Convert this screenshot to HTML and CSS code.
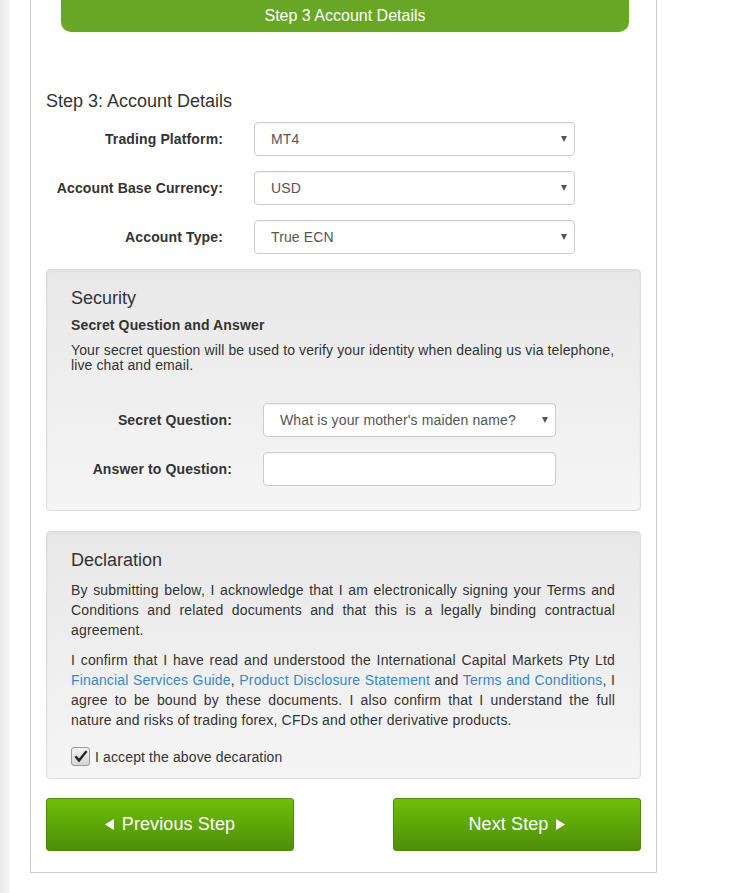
FILE: index.html
```html
<!DOCTYPE html>
<html lang="en">
<head>
    <meta charset="UTF-8">
    <title>Step 3 Account Details</title>
    <link rel="stylesheet" href="styles.css">
</head>
<body>
    <div class="page">
        <div class="step-bar">Step 3 Account Details</div>

        <h2 class="step-title">Step 3: Account Details</h2>

        <div class="form-grid">
            <label class="field-label">Trading Platform:</label>
            <div class="select-wrap"><select class="field"><option>MT4</option></select></div>

            <label class="field-label">Account Base Currency:</label>
            <div class="select-wrap"><select class="field"><option>USD</option></select></div>

            <label class="field-label">Account Type:</label>
            <div class="select-wrap"><select class="field"><option>True ECN</option></select></div>
        </div>

        <div class="well security">
            <h3>Security</h3>
            <h4>Secret Question and Answer</h4>
            <p class="note">Your secret question will be used to verify your identity when dealing us via telephone, live chat and email.</p>

            <div class="form-grid narrow">
                <label class="field-label">Secret Question:</label>
                <div class="select-wrap"><select class="field"><option>What is your mother's maiden name?</option></select></div>

                <label class="field-label">Answer to Question:</label>
                <input class="field" type="text">
            </div>
        </div>

        <div class="well declaration">
            <h3>Declaration</h3>
            <p>By submitting below, I acknowledge that I am electronically signing your Terms and Conditions and related documents and that this is a legally binding contractual agreement.</p>
            <p>I confirm that I have read and understood the International Capital Markets Pty Ltd <a href="#">Financial Services Guide</a>, <a href="#">Product Disclosure Statement</a> and <a href="#">Terms and Conditions</a>, I agree to be bound by these documents. I also confirm that I understand the full nature and risks of trading forex, CFDs and other derivative products.</p>
            <label class="accept">
                <span class="check">
                    <svg width="14" height="13" viewBox="0 0 14 13"><path d="M0.5 7 L5 12.5 L13.5 1.8 L11.6 0.4 L5 8.6 L2.4 5.4 Z" fill="#262626"/></svg>
                </span>
                I accept the above decaration
            </label>
        </div>

        <div class="actions">
            <button class="btn-step" type="button">
                <svg width="9" height="11" viewBox="0 0 9 11"><path d="M0 5.5 L9 0 L9 11 Z" fill="#fff"/></svg>
                Previous Step
            </button>
            <button class="btn-step" type="button">
                Next Step
                <svg width="9" height="11" viewBox="0 0 9 11"><path d="M9 5.5 L0 0 L0 11 Z" fill="#fff"/></svg>
            </button>
        </div>
    </div>
</body>
</html>
```

FILE: styles.css
```css
html, body {
    margin: 0;
    padding: 0;
}
body {
    font-family: "Liberation Sans", Arial, sans-serif;
    font-size: 14px;
    letter-spacing: 0.13px;
    color: #333;
    background: linear-gradient(to right, #e9e9e9 0, #f3f3f3 8px, #fff 11px) no-repeat;
    min-height: 893px;
}
.page {
    width: 595px;
    margin-left: 30px;
    border: 1px solid #ccc;
    border-top: none;
    padding: 0 15px 21px;
}
.step-bar {
    height: 32px;
    line-height: 32px;
    margin: 0 12px 0 15px;
    background: #67a725;
    color: #fff;
    font-size: 16px;
    letter-spacing: normal;
    text-align: center;
    border-radius: 0 0 10px 10px;
    box-shadow: 0 1px 3px rgba(200, 220, 150, 0.35);
}
.step-title {
    margin: 59px 0 11px;
    font-size: 18px;
    font-weight: normal;
    letter-spacing: normal;
    line-height: 20px;
}

/* form rows */
.form-grid {
    display: grid;
    grid-template-columns: 177px 321px;
    column-gap: 31px;
    row-gap: 15px;
    align-items: center;
}
.form-grid.narrow {
    grid-template-columns: 161px 293px;
}
.field-label {
    text-align: right;
    font-weight: bold;
}
.field {
    box-sizing: border-box;
    width: 100%;
    height: 34px;
    padding: 0 16px;
    border: 1px solid #ccc;
    border-radius: 4px;
    background: #fff;
    font-family: inherit;
    font-size: 14px;
    letter-spacing: 0.13px;
    color: #555;
    box-shadow: inset 0 1px 1px rgba(0, 0, 0, 0.05);
    -webkit-appearance: none;
    appearance: none;
    outline: none;
}
.select-wrap {
    position: relative;
}
.select-wrap::after {
    content: "";
    position: absolute;
    right: 8px;
    top: 14px;
    border-left: 3.5px solid transparent;
    border-right: 3.5px solid transparent;
    border-top: 6px solid #555;
    pointer-events: none;
}

/* grey panels */
.well {
    margin-top: 15px;
    padding: 18px 25px 24px 24px;
    border: 1px solid #dcdcdc;
    border-radius: 4px;
    background: linear-gradient(to bottom, #e8e8e8 0, #f5f5f5 100%);
    box-shadow: inset 0 1px 3px rgba(0, 0, 0, 0.05), 0 1px 0 rgba(255, 255, 255, 0.1);
}
.well h3 {
    margin: 0;
    font-size: 18px;
    font-weight: normal;
    letter-spacing: normal;
    line-height: 20px;
}
.security h4 {
    margin: 7px 0 0;
    font-size: 14px;
    line-height: 20px;
}
.security .note {
    margin: 8px 0 30px;
    line-height: 15px;
    letter-spacing: 0.12px;
}
.declaration {
    margin-top: 20px;
    padding-bottom: 12px;
}
.declaration p {
    margin: 10px 0 10px;
    line-height: 20px;
    letter-spacing: 0.17px;
    text-align: justify;
}
.declaration p + p {
    margin-top: 0;
}
.declaration a {
    color: #3a87c9;
    text-decoration: none;
}
.accept {
    display: flex;
    align-items: center;
    gap: 5px;
    margin-top: 17px;
}
.check {
    width: 17px;
    height: 17px;
    border: 1px solid #9a9a9a;
    border-radius: 3px;
    background: linear-gradient(to bottom, #f2f2f2, #d6d6d6);
    display: flex;
    align-items: center;
    justify-content: center;
}

/* step buttons */
.actions {
    display: flex;
    justify-content: space-between;
    margin-top: 19px;
}
.btn-step {
    width: 248px;
    height: 53px;
    border: 1px solid #4a8a0c;
    border-radius: 3px;
    background: linear-gradient(to bottom, #6ec007 0, #4e8d0b 100%);
    color: #fff;
    font-family: inherit;
    font-size: 18px;
    letter-spacing: 0.1px;
    display: flex;
    align-items: center;
    justify-content: center;
    gap: 8px;
    cursor: pointer;
}
```
